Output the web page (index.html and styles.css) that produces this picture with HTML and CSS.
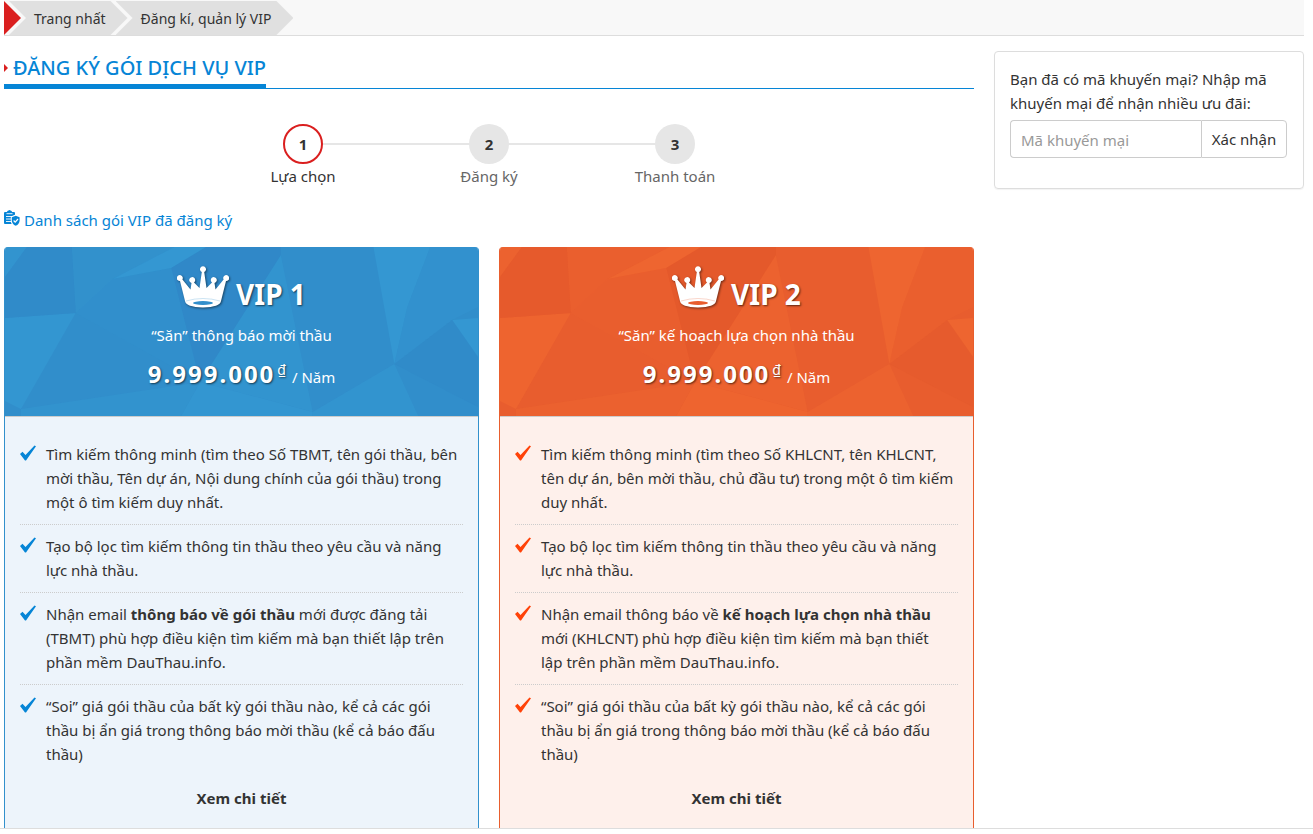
FILE: index.html
```html
<!DOCTYPE html>
<html lang="vi">
<head>
    <meta charset="UTF-8">
    <meta name="viewport" content="width=device-width, initial-scale=1.0">
    <title>Đăng ký gói dịch vụ VIP</title>
    <link rel="stylesheet" href="styles.css">
</head>
<body>
    <!-- shared icons and card background -->
    <svg class="defs" width="0" height="0" aria-hidden="true">
        <symbol id="crown" viewBox="0 0 52 42">
            <path fill="#fff" d="M8 35 L3 15 A3 3 0 1 1 5.400 13.500 L13.500 23.500 L14.500 17 A3 3 0 1 1 17 16.500 L22.500 22 L24.800 6 A3 3 0 1 1 27.200 6 L29.500 22 L35 16.500 A3 3 0 1 1 37.500 17 L38.500 23.500 L46.600 13.500 A3 3 0 1 1 49 15 L44 35 Q43 41 26 41.500 Q9 41 8 35 Z"/>
            <path fill="none" stroke="currentColor" stroke-width="0.500" stroke-opacity="0.500" d="M9 35 Q26 30 43 35"/>
            <ellipse fill="currentColor" cx="26" cy="37" rx="10" ry="1.900"/>
        </symbol>
        <symbol id="check" viewBox="0 0 16 16">
            <path fill="currentColor" d="M0 9 L2.500 6.800 L5.500 10 L14.500 0.500 L16 1.200 L6 15.500 L5 15.500 Z"/>
        </symbol>
        <symbol id="facets" viewBox="0 0 475 169" preserveAspectRatio="none">
            <g class="light">
                <path opacity="0.600" d="M0 0H22L0 30Z"/>
                <path opacity="0.900" d="M0 71L71 66L16 162L0 154Z"/>
                <path d="M108 32L170 0H202L167 21Z"/>
                <path opacity="0.300" d="M67 0H170L108 32L71 66Z"/>
                <path opacity="0.200" d="M71 66L108 32L167 21L196 135Z"/>
                <path opacity="0.600" d="M196 135L277 8L309 165Z"/>
                <path d="M370 0H427L404 60L391 117Z"/>
                <path opacity="0.400" d="M427 0H475V60L449 73L391 117L404 60Z"/>
                <path d="M449 73L475 71V110Z"/>
                <path opacity="0.500" d="M16 162L196 135L177 169H16Z"/>
                <path opacity="0.900" d="M196 135L309 165V169H177Z"/>
                <path opacity="0.600" d="M309 165L391 117L415 169H309Z"/>
            </g>
            <g class="dark">
                <path opacity="0.600" d="M22 0H67L71 66L0 71V30Z"/>
                <path d="M167 21L202 0H277V8L196 135Z"/>
                <path opacity="0.500" d="M391 117L449 73L475 110V160Z"/>
            </g>
        </symbol>
    </svg>

    <div class="page">
        <nav class="breadcrumb">
            <span class="arrow"></span>
            <a href="#" class="crumb">Trang nhất</a>
            <a href="#" class="crumb">Đăng kí, quản lý VIP</a>
        </nav>

        <div class="row">
            <main class="main">
                <div class="title">
                    <h1>ĐĂNG KÝ GÓI DỊCH VỤ VIP</h1>
                </div>

                <ol class="steps">
                    <li class="active"><span class="num">1</span>Lựa chọn</li>
                    <li><span class="num">2</span>Đăng ký</li>
                    <li><span class="num">3</span>Thanh toán</li>
                </ol>

                <a href="#" class="vip-list">
                    <svg width="16" height="16" viewBox="0 0 16 16" aria-hidden="true">
                        <path fill="currentColor" d="M1 2H3Q3 0.500 4.500 0.500Q5.500 -0.500 6.500 0.500Q8 0.500 8 2H10Q11 2 11 3V14H1Q0 14 0 13V3Q0 2 1 2Z"/>
                        <path stroke="#fff" stroke-width="0.900" d="M2.500 3.700H8.500M2 6.500H8M2 9H7M2 11.500H7"/>
                        <path fill="#fff" d="M11.500 4.500L16 6.500V16H8.500L6.800 12V6.500Z"/>
                        <path fill="currentColor" d="M11.700 5.700L15.600 7.300V10.500Q15.300 14.300 11.700 15.800Q8.100 14.300 7.800 10.500V7.300Z"/>
                        <path fill="none" stroke="#fff" stroke-width="1.200" d="M9.600 10.500L11.200 12.200L14 9"/>
                    </svg>
                    Danh sách gói VIP đã đăng ký
                </a>

                <div class="plans">
                    <section class="plan blue">
                        <header class="plan-header">
                            <svg class="facets" aria-hidden="true"><use href="#facets"/></svg>
                            <h2><svg class="crown" aria-hidden="true"><use href="#crown"/></svg>VIP 1</h2>
                            <p>“Săn” thông báo mời thầu</p>
                            <div class="price"><strong>9.999.000</strong><sup>₫</sup> / Năm</div>
                        </header>
                        <ul>
                            <li><svg class="check" aria-hidden="true"><use href="#check"/></svg><span>Tìm kiếm thông minh (tìm theo Số TBMT, tên gói thầu, bên mời thầu, Tên dự án, Nội dung chính của gói thầu) trong một ô tìm kiếm duy nhất.</span></li>
                            <li><svg class="check" aria-hidden="true"><use href="#check"/></svg><span>Tạo bộ lọc tìm kiếm thông tin thầu theo yêu cầu và năng lực nhà thầu.</span></li>
                            <li><svg class="check" aria-hidden="true"><use href="#check"/></svg><span>Nhận email <b>thông báo về gói thầu</b> mới được đăng tải (TBMT) phù hợp điều kiện tìm kiếm mà bạn thiết lập trên phần mềm DauThau.info.</span></li>
                            <li><svg class="check" aria-hidden="true"><use href="#check"/></svg><span>“Soi” giá gói thầu của bất kỳ gói thầu nào, kể cả các gói thầu bị ẩn giá trong thông báo mời thầu (kể cả báo đấu thầu)</span></li>
                        </ul>
                        <a href="#" class="more">Xem chi tiết</a>
                    </section>

                    <section class="plan orange">
                        <header class="plan-header">
                            <svg class="facets" aria-hidden="true"><use href="#facets"/></svg>
                            <h2><svg class="crown" aria-hidden="true"><use href="#crown"/></svg>VIP 2</h2>
                            <p>“Săn” kế hoạch lựa chọn nhà thầu</p>
                            <div class="price"><strong>9.999.000</strong><sup>₫</sup> / Năm</div>
                        </header>
                        <ul>
                            <li><svg class="check" aria-hidden="true"><use href="#check"/></svg><span>Tìm kiếm thông minh (tìm theo Số KHLCNT, tên KHLCNT, tên dự án, bên mời thầu, chủ đầu tư) trong một ô tìm kiếm duy nhất.</span></li>
                            <li><svg class="check" aria-hidden="true"><use href="#check"/></svg><span>Tạo bộ lọc tìm kiếm thông tin thầu theo yêu cầu và năng lực nhà thầu.</span></li>
                            <li><svg class="check" aria-hidden="true"><use href="#check"/></svg><span>Nhận email thông báo về <b>kế hoạch lựa chọn nhà thầu</b> mới (KHLCNT) phù hợp điều kiện tìm kiếm mà bạn thiết lập&nbsp;trên phần mềm DauThau.info.</span></li>
                            <li><svg class="check" aria-hidden="true"><use href="#check"/></svg><span>“Soi” giá gói thầu của bất kỳ gói thầu nào, kể cả các gói thầu bị ẩn giá trong thông báo mời thầu (kể cả báo đấu thầu)</span></li>
                        </ul>
                        <a href="#" class="more">Xem chi tiết</a>
                    </section>
                </div>
            </main>

            <aside class="promo">
                <label for="promoCode">Bạn đã có mã khuyến mại? Nhập mã khuyến mại để nhận nhiều ưu đãi:</label>
                <div class="input-group">
                    <input type="text" id="promoCode" placeholder="Mã khuyến mại">
                    <button type="button">Xác nhận</button>
                </div>
            </aside>
        </div>
    </div>

    <div class="bottom-bar"></div>
</body>
</html>
```
FILE: styles.css
```css
* {
    box-sizing: border-box;
}
body {
    margin: 0;
    font-family: "Segoe UI", "Noto Sans", sans-serif;
    font-size: 15px;
    line-height: 24px;
    color: #333;
    background-color: #fff;
}
a {
    color: #0685d6;
    text-decoration: none;
}
.defs {
    position: absolute;
}
.page {
    padding: 0 9px 0 4px;
}

/* breadcrumb */
.breadcrumb {
    display: flex;
    height: 36px;
    padding-top: 1px;
    background-color: #f8f8f8;
    border-bottom: 1px solid #ddd;
}
.breadcrumb .arrow {
    width: 17px;
    background-color: #da1f1f;
    clip-path: polygon(0 0, 100% 50%, 0 100%);
}
.breadcrumb .crumb {
    margin-left: -12px;
    padding: 0 22px 0 25px;
    font-size: 14px;
    line-height: 36px;
    color: #333;
    background-color: #e0e0e0;
    clip-path: polygon(0 0, calc(100% - 17px) 0, 100% 50%, calc(100% - 17px) 100%, 0 100%, 17px 50%);
}

.row {
    display: flex;
    align-items: flex-start;
    gap: 20px;
    padding-top: 15px;
}
.main {
    flex: 1;
}

/* title */
.title {
    display: flex;
    border-bottom: 1px solid #0685d6;
}
.title h1 {
    display: flex;
    align-items: center;
    margin: 0;
    height: 37px;
    border-bottom: 4px solid #0685d6;
    font-size: 20px;
    font-weight: 500;
    color: #0685d6;
}
.title h1::before {
    content: "";
    margin-right: 5px;
    border-left: 4px solid #da1f1f;
    border-top: 4px solid transparent;
    border-bottom: 4px solid transparent;
}

/* steps */
.steps {
    display: flex;
    justify-content: center;
    margin: 35px 0 20px;
    padding: 0;
    list-style: none;
}
.steps li {
    position: relative;
    width: 186px;
    text-align: center;
    color: #666;
}
.steps li + li::before {
    content: "";
    position: absolute;
    top: 19px;
    right: 50%;
    width: 100%;
    height: 2px;
    background-color: #e6e6e6;
}
.steps .num {
    position: relative;
    z-index: 1;
    display: block;
    width: 40px;
    height: 40px;
    margin: 0 auto;
    border-radius: 50%;
    background-color: #e6e6e6;
    line-height: 40px;
    font-weight: bold;
    color: #333;
}
.steps .active {
    color: #333;
}
.steps .active .num {
    border: 2px solid #da1f1f;
    background-color: #fff;
    line-height: 36px;
}

.vip-list {
    display: flex;
    gap: 4px;
    margin-bottom: 15px;
}
.vip-list svg {
    margin-top: 2px;
}

/* plans */
.plans {
    display: grid;
    grid-template-columns: 1fr 1fr;
    gap: 20px;
}
.plan {
    border: 1px solid;
    border-top: 0;
    border-bottom: 0;
    border-radius: 4px 4px 0 0;
    overflow: hidden;
}
.blue {
    border-color: #3290cc;
    background-color: #edf4fb;
}
.orange {
    border-color: #e85e2e;
    background-color: #fef0eb;
}
.plan-header {
    position: relative;
    height: 170px;
    padding-top: 18px;
    text-align: center;
    color: #fff;
    border-bottom: 1px solid #ccc;
}
.blue .plan-header {
    background-color: #318ecb;
}
.orange .plan-header {
    background-color: #e85d2e;
}
.facets {
    position: absolute;
    top: 0;
    left: 0;
    width: 100%;
    height: 100%;
    --light: #3497d2;
    --dark: #3088c8;
}
.orange .facets {
    --light: #ee6530;
    --dark: #e4592b;
}
.light {
    fill: var(--light);
}
.dark {
    fill: var(--dark);
}
.plan-header h2,
.plan-header p,
.price {
    position: relative;
    margin: 0;
}
.plan-header h2 {
    display: flex;
    justify-content: center;
    gap: 7px;
    height: 58px;
    font-size: 28px;
    line-height: 58px;
    text-shadow: 1px 1px 2px rgba(0, 0, 0, 0.6);
}
.crown {
    width: 52px;
    height: 42px;
    margin-top: 1px;
    filter: drop-shadow(1px 1px 1px rgba(0, 0, 0, 0.5));
}
.blue .crown {
    color: #318ecb;
}
.orange .crown {
    color: #e85d2e;
}
.price {
    margin-top: 11px;
    line-height: 32px;
}
.price strong {
    font-size: 24px;
    letter-spacing: 2px;
    text-shadow: 1px 1px 2px rgba(0, 0, 0, 0.6);
}
.price sup {
    margin: 0 2px;
    font-size: 14px;
    line-height: 0;
    vertical-align: 8px;
    text-shadow: 1px 1px 2px rgba(0, 0, 0, 0.6);
}
.plan ul {
    margin: 0;
    padding: 16px 15px 0;
    list-style: none;
}
.plan li {
    display: flex;
    gap: 10px;
    padding: 9px 0 10px;
    border-bottom: 1px dotted #ccc;
}
.plan li:last-child {
    border-bottom: 0;
}
.check {
    flex: none;
    width: 16px;
    height: 16px;
    margin-top: 3px;
}
.blue .check {
    color: #0685d6;
}
.orange .check {
    color: #ff4208;
}
.more {
    display: block;
    padding: 10px 0 24px;
    text-align: center;
    font-weight: bold;
    color: #333;
}

/* promo box */
.promo {
    width: 310px;
    min-height: 138px;
    padding: 15px 16px 15px 15px;
    border: 1px solid #ddd;
    border-radius: 4px;
    box-shadow: 0 1px 1px rgba(0, 0, 0, 0.05);
}
.promo label {
    display: block;
    margin-bottom: 5px;
}
.input-group {
    display: flex;
}
.input-group input,
.input-group button {
    height: 38px;
    border: 1px solid #ccc;
    font: inherit;
    background-color: #fff;
    color: #333;
}
.input-group input {
    flex: 1;
    min-width: 0;
    padding: 2px 10px 0;
    border-right: 0;
    border-radius: 4px 0 0 4px;
}
.input-group input::placeholder {
    color: #999;
}
.input-group button {
    width: 86px;
    padding: 0;
    border-radius: 0 4px 4px 0;
}

/* bar pinned to the bottom of the window */
.bottom-bar {
    position: fixed;
    left: 0;
    right: 0;
    bottom: 0;
    z-index: 10;
    height: 6px;
    border-top: 1px solid #ddd;
    background-color: #fff;
}
```
